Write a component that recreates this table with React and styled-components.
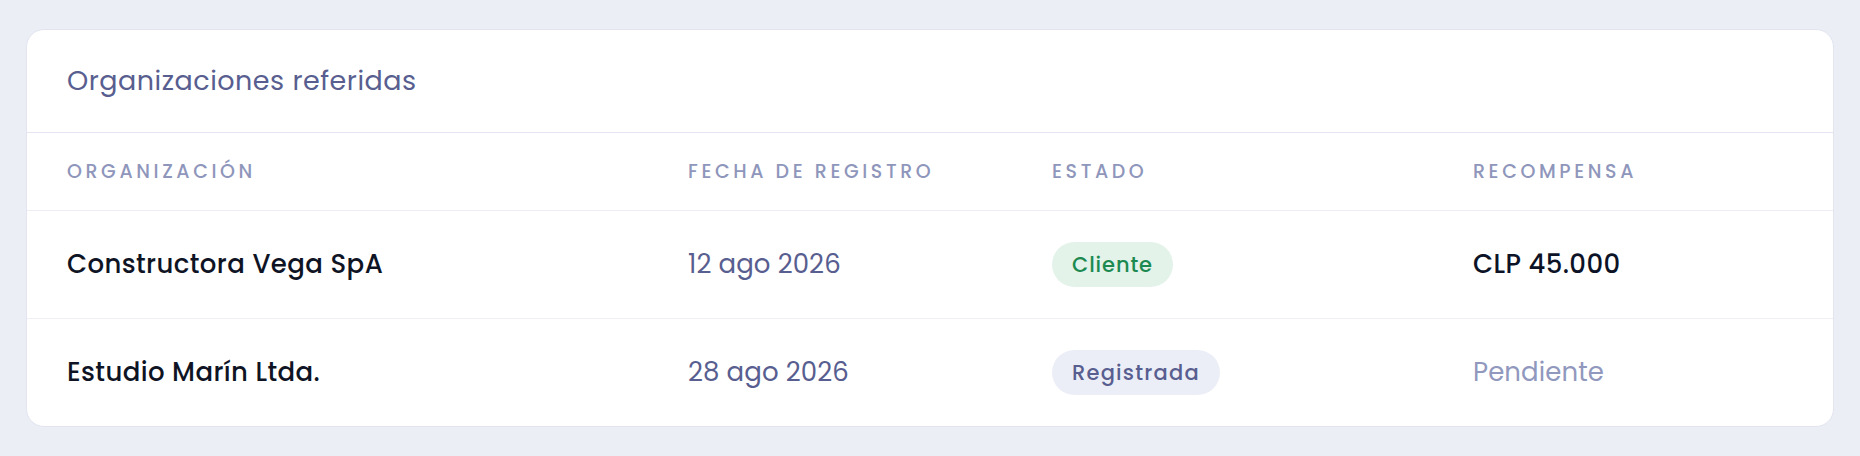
import styled, { createGlobalStyle } from "styled-components";

const GlobalStyle = createGlobalStyle`
  html, body {
    margin: 0;
    background: #eceef6;
  }
  body {
    font-family: Poppins, Inter, "Noto Sans", sans-serif;
  }
`;

const referrals = [
  {
    name: "Constructora Vega SpA",
    date: "12 ago 2026",
    status: "Cliente",
    tone: "green",
    reward: "CLP 45.000",
    paid: true,
  },
  {
    name: "Estudio Marín Ltda.",
    date: "28 ago 2026",
    status: "Registrada",
    tone: "slate",
    reward: "Pendiente",
    paid: false,
  },
];

const columns = ["Organización", "Fecha de registro", "Estado", "Recompensa"];

const App = () => {
  return (
    <Page>
      <GlobalStyle />
      <Card>
        <CardHeader>
          <Title>Organizaciones referidas</Title>
        </CardHeader>
        <HeadRow>
          {columns.map((c) => (
            <HeadCell key={c}>{c}</HeadCell>
          ))}
        </HeadRow>
        {referrals.map((r) => (
          <Row key={r.name}>
            <Name>{r.name}</Name>
            <DateCell>{r.date}</DateCell>
            <div>
              <Pill $tone={r.tone}>{r.status}</Pill>
            </div>
            <Reward $paid={r.paid}>{r.reward}</Reward>
          </Row>
        ))}
      </Card>
    </Page>
  );
};

export default App;

const Page = styled.div`
  padding: 29px 26px 30px;
`;

const Card = styled.div`
  background: #ffffff;
  border: 1px solid #e2e4ef;
  border-radius: 18px;
  overflow: hidden;
`;

const CardHeader = styled.div`
  height: 102px;
  display: flex;
  align-items: center;
  padding: 0 40px;
  border-bottom: 1px solid #e4e5f0;
`;

const Title = styled.h2`
  margin: 0;
  font-size: 27px;
  font-weight: 400;
  color: #585e8f;
  letter-spacing: 0.5px;
`;

const grid = `
  display: grid;
  grid-template-columns: 621px 364px 421px 1fr;
  align-items: center;
  padding: 0 40px;
`;

const HeadRow = styled.div`
  ${grid}
  height: 77px;
  border-bottom: 1px solid #eceef4;
`;

const HeadCell = styled.div`
  font-size: 19px;
  font-weight: 500;
  text-transform: uppercase;
  letter-spacing: 3.6px;
  color: #8f96bb;
`;

const Row = styled.div`
  ${grid}
  height: 107px;
  & + & {
    border-top: 1px solid #eff0f5;
  }
`;

const Name = styled.div`
  font-size: 26px;
  font-weight: 500;
  color: #0f1424;
  letter-spacing: 0.4px;
`;

const DateCell = styled.div`
  font-size: 26px;
  font-weight: 400;
  color: #585e8f;
  letter-spacing: 0.1px;
`;

const Pill = styled.span`
  display: inline-flex;
  align-items: center;
  height: 45px;
  padding: 0 20px;
  border-radius: 23px;
  font-size: 21px;
  font-weight: 500;
  letter-spacing: ${(p) => (p.$tone === "green" ? "0.9px" : "1.2px")};
  background: ${(p) => (p.$tone === "green" ? "#e3f3ea" : "#eceef7")};
  color: ${(p) => (p.$tone === "green" ? "#1c8a50" : "#585e8f")};
`;

const Reward = styled.div`
  font-size: 26px;
  font-weight: ${(p) => (p.$paid ? 500 : 400)};
  color: ${(p) => (p.$paid ? "#0d1326" : "#9198be")};
  letter-spacing: ${(p) => (p.$paid ? "0.4px" : "0.1px")};
`;
